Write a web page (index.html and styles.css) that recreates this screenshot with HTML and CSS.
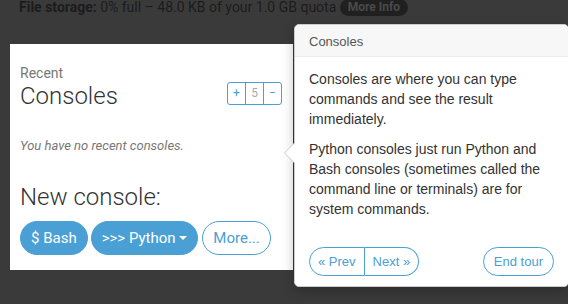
FILE: index.html
```html
<!DOCTYPE html>
<html lang="en">
<head>
  <meta charset="UTF-8" />
  <title>Consoles tour</title>
  <link rel="stylesheet" href="styles.css">
</head>
<body>
  <div class="storage">
    <b>File storage:</b> 0% full &ndash; 48.0 KB of your 1.0 GB quota <span class="badge">More Info</span>
  </div>

  <div class="stage">
    <div class="card">
      <div class="card-head">
        <div>
          <div class="kicker">Recent</div>
          <h2>Consoles</h2>
        </div>
        <div class="counter">
          <span class="plus">+</span>
          <span class="num">5</span>
          <span class="minus">&minus;</span>
        </div>
      </div>
      <p class="empty">You have no recent consoles.</p>
      <h2 class="new">New console:</h2>
      <div class="actions">
        <button class="pill solid">$ Bash</button>
        <button class="pill solid">&gt;&gt;&gt; Python <span class="caret"></span></button>
        <button class="pill outline">More...</button>
      </div>
    </div>

    <div class="popover">
      <div class="arrow"></div>
      <div class="pop-title">Consoles</div>
      <div class="pop-body">
        <p>Consoles are where you can type commands and see the result immediately.</p>
        <p>Python consoles just run Python and Bash consoles (sometimes called the command line or terminals) are for system commands.</p>
      </div>
      <div class="pop-nav">
        <div class="group">
          <button class="tbtn left">&laquo; Prev</button>
          <button class="tbtn right">Next &raquo;</button>
        </div>
        <button class="tbtn end">End tour</button>
      </div>
    </div>
  </div>
</body>
</html>
```

FILE: styles.css
```css
body {
  margin: 0;
  background-color: #3a3a3a;
  font-family: Roboto, sans-serif;
  height: 304px;
  overflow: hidden;
}

.storage {
  padding-left: 19px;
  margin-top: -3px;
  font-size: 14px;
  line-height: 20px;
  color: #1c1c1c;
}

.storage b {
  font-weight: bold;
}

.badge {
  display: inline-block;
  background-color: #202020;
  color: #4a4a4a;
  font-size: 12px;
  font-weight: bold;
  padding: 0 8px;
  line-height: 17px;
  border-radius: 9px;
  vertical-align: 1px;
}

.stage {
  position: relative;
  margin-top: 27px;
  margin-left: 10px;
}

.card {
  background-color: #fff;
  width: 263px;
  padding: 21px 10px 15px 10px;
}

.card-head {
  display: flex;
  justify-content: space-between;
  align-items: flex-end;
}

.kicker {
  color: #777;
  font-size: 14px;
  line-height: 16px;
}

h2 {
  margin: 0;
  font-weight: 300;
  color: #333;
  font-size: 24px;
  line-height: 30px;
}

.counter {
  display: flex;
  border: 1px solid #4a9fd5;
  border-radius: 3px;
  margin-bottom: 6px;
  margin-right: 1px;
}

.counter span {
  width: 17px;
  height: 21px;
  line-height: 21px;
  text-align: center;
  font-size: 12px;
  color: #4a9fd5;
}

.counter .num {
  color: #aaa;
  border-left: 1px solid #4a9fd5;
  border-right: 1px solid #4a9fd5;
}

.empty {
  margin: 26px 0 0 0;
  font-style: italic;
  color: #777;
  font-size: 13px;
  line-height: 18px;
}

.new {
  margin-top: 27px;
}

.actions {
  display: flex;
  gap: 3px;
  margin-top: 9px;
}

.pill {
  font-family: Roboto, sans-serif;
  font-size: 15px;
  height: 34px;
  border-radius: 17px;
  padding: 0 10px;
  border: 1px solid #4aa0d5;
  cursor: pointer;
}

.solid {
  background-color: #4aa0d5;
  color: #fff;
}

.outline {
  background-color: #fff;
  color: #4aa0d5;
  margin-left: 1px;
}

.caret {
  display: inline-block;
  border-left: 4px solid transparent;
  border-right: 4px solid transparent;
  border-top: 4px solid #fff;
  vertical-align: 3px;
  margin-left: 0;
}

.popover {
  position: absolute;
  left: 284px;
  top: -20px;
  width: 273px;
  background-color: #fff;
  border: 1px solid #ccc;
  border-radius: 5px;
  font-family: "Liberation Sans", Arial, sans-serif;
  box-shadow: 0 4px 12px rgba(0, 0, 0, 0.25);
}

.arrow {
  position: absolute;
  left: -11px;
  top: 117px;
  border-top: 11px solid transparent;
  border-bottom: 11px solid transparent;
  border-right: 11px solid #ccc;
}

.arrow::after {
  content: "";
  position: absolute;
  left: 1px;
  top: -10px;
  border-top: 10px solid transparent;
  border-bottom: 10px solid transparent;
  border-right: 10px solid #fff;
}

.pop-title {
  background-color: #f7f7f7;
  border-bottom: 1px solid #ebebeb;
  border-radius: 5px 5px 0 0;
  padding: 9px 14px 7px 14px;
  font-size: 13px;
  line-height: 15px;
  color: #555;
}

.pop-body {
  padding: 12px 14px 0 14px;
  font-size: 14px;
  line-height: 20px;
  color: #333;
}

.pop-body p {
  margin: 0 0 10px 0;
}

.pop-nav {
  display: flex;
  justify-content: space-between;
  padding: 18px 14px 10px 14px;
}

.group {
  display: flex;
}

.tbtn {
  font-family: "Liberation Sans", Arial, sans-serif;
  font-size: 13px;
  color: #4aa0d5;
  background-color: #fff;
  border: 1px solid #4aa0d5;
  height: 29px;
  border-radius: 15px;
  padding: 0 8px;
}

.tbtn.end {
  padding: 0 10px;
}

.tbtn.left {
  border-radius: 15px 0 0 15px;
}

.tbtn.right {
  border-radius: 0 15px 15px 0;
  border-left: none;
}
```
